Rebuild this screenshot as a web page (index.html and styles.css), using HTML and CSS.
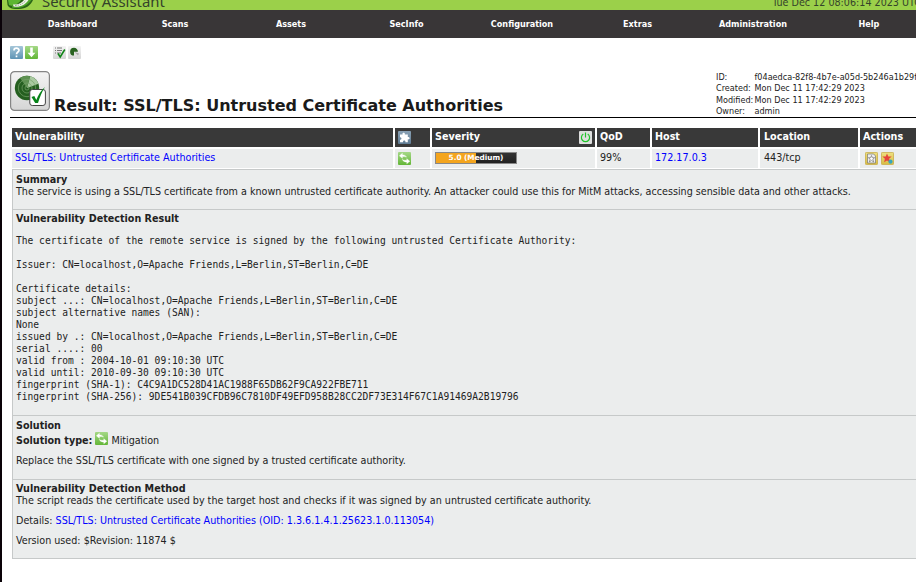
FILE: index.html
```html
<!DOCTYPE html>
<html lang="en">
<head>
<meta charset="utf-8">
<title>Result: SSL/TLS: Untrusted Certificate Authorities</title>
<link rel="stylesheet" href="styles.css">
</head>
<body>
<svg class="defs" width="0" height="0">
  <defs>
    <linearGradient id="blue" x2="0" y2="1"><stop stop-color="#a5c6d8"/><stop offset="1" stop-color="#5e94b5"/></linearGradient>
    <linearGradient id="green" x2="0" y2="1"><stop stop-color="#a5d887"/><stop offset="1" stop-color="#63b637"/></linearGradient>
    <linearGradient id="grey" x2="0" y2="1"><stop stop-color="#f4f4f4"/><stop offset="1" stop-color="#d5d5d5"/></linearGradient>
    <linearGradient id="steel" x2="0" y2="1"><stop stop-color="#8ba2b6"/><stop offset="1" stop-color="#5e7b93"/></linearGradient>
    <linearGradient id="gold" x2="0" y2="1"><stop stop-color="#eee080"/><stop offset="1" stop-color="#d8bc42"/></linearGradient>
    <symbol id="mitigate" viewBox="0 0 13 13">
      <rect width="13" height="13" rx="1" fill="url(#green)"/>
      <path d="M1.4 3.8 4.4 1.3v1.6c2 0 3.4.6 4.1 2.2-1.3-.6-2.6-.6-4.1-.5v1.7zM11.8 9.2 8.8 6.7v1.6c-1.7.1-3 0-4.5-.9.7 1.8 2.4 2.5 4.5 2.6v1.7z" fill="#fff" stroke="#fff" stroke-width=".4"/>
    </symbol>
  </defs>
</svg>
<header class="banner">
  <svg class="logo" width="32" height="10" viewBox="0 0 32 10">
    <path d="M4 0h26c-2 5-7 9-14 9C9 9.300 6 8 4.500 5z" fill="#2a6416"/>
    <path d="M5 0h13c-3 4-8 7-12 5z" fill="#5cb531"/>
    <path d="M9 6c5 2 12 0 16-6h3.500c-4 6-12 9.500-19.500 7.500z" fill="#4da52a"/>
    <path d="M10 4.500c5 .5 9-1.500 11-4.500h4.500c-3 5-9 7.700-15 6.500z" fill="#eef5e5"/>
    <path d="M12 5.500c5 0 8-2 11-5" stroke="#888" stroke-width=".8" stroke-dasharray="1.500 1" fill="none"/>
  </svg>
  <span class="brand">Security Assistant</span>
  <span class="clock">Tue Dec 12 08:06:14 2023 UTC</span>
</header>
<nav class="nav">
  <a>Dashboard</a><a>Scans</a><a>Assets</a><a>SecInfo</a><a>Configuration</a><a>Extras</a><a>Administration</a><a>Help</a>
</nav>
<main class="page">
  <div class="tools">
    <svg viewBox="0 0 13 13"><rect width="13" height="13" rx="1" fill="url(#blue)"/><path d="M4 4.500C4 1.400 9 1.500 9 4.300 9 6 6.500 6.100 6.500 8.300M6.500 9.500v1.700" fill="none" stroke="#fff" stroke-width="1.700"/></svg>
    <svg viewBox="0 0 13 13"><rect width="13" height="13" rx="1" fill="url(#green)"/><path d="M5.200 1.500h2.600v5.200h2.600L6.500 11.300 2.600 6.700h2.600z" fill="#fff"/></svg>
    <svg class="gap" viewBox="0 0 13 13"><rect width="13" height="13" rx="1" fill="url(#grey)"/><path d="M2 2h1M2 4.500h1M2 7h1M4 2h5M4 4.500h5M4 7h4" stroke="#777" stroke-width="1.100"/><path d="m5 7.500 2.200 3.500L11.800 3.500" fill="none" stroke="#118518" stroke-width="1.600"/></svg>
    <svg viewBox="0 0 13 13"><rect width="13" height="13" rx="1" fill="url(#grey)"/><path d="M6 1.800a3.900 3.900 0 1 0 0 7.800V5.800h3.900A3.900 3.900 0 0 0 6 1.800z" fill="#286220"/><path d="m6.500 6 4.500 1.500-1 2z" fill="#aaa"/></svg>
  </div>
  <div class="heading">
    <svg class="result-icon" width="40" height="40" viewBox="0 0 40 40">
      <rect x=".6" y=".6" width="38.800" height="38.800" rx="4" fill="url(#grey)" stroke="#858585" stroke-width="1.200"/>
      <circle cx="17" cy="17" r="12.200" fill="#255f20"/>
      <path d="M17 17 20 5.200a12.200 12.200 0 0 1 8.500 7.500z" fill="#a9c9a0"/>
      <path d="M17 17 10 7a12.200 12.200 0 0 1 10-1.800z" fill="#5e9152"/>
      <g fill="none" stroke="#75a068" stroke-width=".7"><circle cx="17" cy="17" r="8.700"/><circle cx="17" cy="17" r="5"/><circle cx="17" cy="17" r="2"/></g>
      <rect x="19.800" y="18.500" width="15.600" height="16" rx="2.500" fill="#fff" stroke="#444"/>
      <path d="m21.500 26 2.800-1.100 2 4.200C28 24 31 19.500 35 16c-3.200 5-5.200 10-7 16h-2.800z" fill="#078319"/>
    </svg>
    <h1>Result: SSL/TLS: Untrusted Certificate Authorities</h1>
    <dl class="meta">
      <dt>ID:</dt><dd>f04aedca-82f8-4b7e-a05d-5b246a1b29f</dd>
      <dt>Created:</dt><dd>Mon Dec 11 17:42:29 2023</dd>
      <dt>Modified:</dt><dd>Mon Dec 11 17:42:29 2023</dd>
      <dt>Owner:</dt><dd>admin</dd>
    </dl>
  </div>
  <section class="result">
    <div class="row head">
      <div>Vulnerability</div>
      <div><svg class="ico" viewBox="0 0 13 13"><rect width="13" height="13" rx="1" fill="url(#steel)"/><path d="M2 3.500h2.600C3.600 1 7.600 1 6.800 3.500h3v2.600c2.500-1 2.500 3 0 2.200v3H7.400c.6-2.300-2.900-2.300-2.300 0H2V8.700c2 .6 2-2.900 0-2.300z" fill="#fff"/></svg></div>
      <div>Severity<svg class="ico power" viewBox="0 0 13 13"><rect width="13" height="13" rx="1" fill="#dedede"/><path d="M4.300 3.100a4.100 4.100 0 1 0 4.400 0M6.500 1.600v5" fill="none" stroke="#20c52a" stroke-width="1.200"/></svg></div>
      <div>QoD</div><div>Host</div><div>Location</div><div>Actions</div>
    </div>
    <div class="row data">
      <div><a>SSL/TLS: Untrusted Certificate Authorities</a></div>
      <div><svg class="ico"><use href="#mitigate"/></svg></div>
      <div><span class="meter">5.0 (Medium)</span></div>
      <div>99%</div><div><a>172.17.0.3</a></div><div>443/tcp</div>
      <div class="actions">
        <svg class="ico" viewBox="0 0 13 13"><rect x=".4" y=".4" width="12.200" height="12.200" rx="1" fill="url(#gold)" stroke="#c5aa42" stroke-width=".8"/><path d="M2.500 2h6.200L10.500 4v7h-8z" fill="#eee" stroke="#777" stroke-width=".7"/><path d="m6.500 3.500.8 2.200h2.300L7.800 7.200l.9 2.800-2.200-1.600L4.300 10l.9-2.800-1.800-1.500h2.300z" fill="#fff" stroke="#777" stroke-width=".7"/></svg>
        <svg class="ico" viewBox="0 0 13 13"><rect x=".4" y=".4" width="12.200" height="12.200" rx="1" fill="url(#gold)" stroke="#c5aa42" stroke-width=".8"/><path d="m6 1.400 1.300 3 3.400.2-2.600 2.200.8 3.500L6 8.400l-2.900 1.900.8-3.500-2.600-2.200 3.400-.2z" fill="#e5443b"/><circle cx="9.500" cy="9.700" r="2.100" fill="#36a7bd"/></svg>
      </div>
    </div>
    <article class="details">
      <section class="summary"><h2>Summary</h2><p>The service is using a SSL/TLS certificate from a known untrusted certificate authority. An attacker could use this for MitM attacks, accessing sensible data and other attacks.</p></section>
      <section class="detection"><h2>Vulnerability Detection Result</h2>
<pre>The certificate of the remote service is signed by the following untrusted Certificate Authority:

Issuer: CN=localhost,O=Apache Friends,L=Berlin,ST=Berlin,C=DE

Certificate details:
subject ...: CN=localhost,O=Apache Friends,L=Berlin,ST=Berlin,C=DE
subject alternative names (SAN):
None
issued by .: CN=localhost,O=Apache Friends,L=Berlin,ST=Berlin,C=DE
serial ....: 00
valid from : 2004-10-01 09:10:30 UTC
valid until: 2010-09-30 09:10:30 UTC
fingerprint (SHA-1): C4C9A1DC528D41AC1988F65DB62F9CA922FBE711
fingerprint (SHA-256): 9DE541B039CFDB96C7810DF49EFD958B28CC2DF73E314F67C1A91469A2B19796</pre></section>
      <section class="solution"><h2>Solution</h2><p class="type"><b>Solution type:</b><svg class="ico"><use href="#mitigate"/></svg>Mitigation</p><p>Replace the SSL/TLS certificate with one signed by a trusted certificate authority.</p></section>
      <section class="method"><h2>Vulnerability Detection Method</h2><p>The script reads the certificate used by the target host and checks if it was signed by an untrusted certificate authority.</p><p>Details: <a>SSL/TLS: Untrusted Certificate Authorities (OID: 1.3.6.1.4.1.25623.1.0.113054)</a></p><p>Version used: $Revision: 11874 $</p></section>
    </article>
  </section>
</main>
</body>
</html>
```
FILE: styles.css
```css
* { box-sizing: border-box; }
html { background: #fff; }
body { margin: 0; width: 916px; height: 582px; overflow: hidden; border-left: 2px solid #0a0208; color: #222; font: 10.68px/12px "DejaVu Sans Condensed", "DejaVu Sans", sans-serif; font-stretch: condensed; }
.defs { position: absolute; }
h1, h2, p, dl, dd, pre { margin: 0; }
a { color: #00f; }
.banner { height: 10px; display: flex; background: #9bd04a; overflow: hidden; color: #34432a; }
.logo { flex: none; margin-left: 1px; }
.brand { margin-left: 7px; font: 14.9px/20px "Noto Sans", sans-serif; height: 20px; margin-top: -9px; white-space: nowrap; }
.clock { margin: -7px -5px 0 auto; line-height: 20px; white-space: nowrap; }
.nav { height: 28px; width: 926px; display: grid; grid-template-columns: 87px 118px 114px 117px 114px 117px 114px 118px; padding-left: 27px; background: #393637; }
.nav a { color: #fff; font: bold 9px/28px "DejaVu Sans Condensed", sans-serif; text-align: center; }
.page { padding: 8px 0 0 8px; }
.tools { display: flex; gap: 2px; height: 25px; }
.tools svg { width: 13px; height: 13px; }
.tools .gap { margin-left: 13px; }
.heading { height: 47px; width: 906px; border-bottom: 1px solid #000; display: flex; }
.result-icon { flex: none; }
h1 { width: 666px; flex: none; padding: 25px 0 0 4px; font: bold 16px/20px "DejaVu Sans", sans-serif; white-space: nowrap; color: #1a1a1a; }
.meta { display: grid; grid-template-columns: 38.5px 170px; grid-auto-rows: 11.4px; font-size: 9px; line-height: 12px; white-space: nowrap; }
.result { padding: 10px 0 0 2px; width: 950px; }
.row { display: grid; grid-template-columns: 381px 35px 163px 53px 106px 98px 90px; gap: 2px; height: 19px; margin-bottom: 2px; }
.row > div { padding-left: 3px; line-height: 17px; display: flex; white-space: nowrap; }
.row > div:nth-child(6) { padding-left: 4px; }
.head > div { background: #393939; color: #fff; font-weight: bold; }
.data > div { background: #ebeded; }
.data { margin-bottom: 1px; }
.ico { width: 13px; height: 13px; flex: none; margin-top: 3px; }
.power { margin-left: auto; margin-right: 3px; }
.meter { margin-top: 3px; width: 82px; height: 12px; border: 1px solid #888; background: linear-gradient(90deg, #f4a51e 50%, transparent 50%), linear-gradient(#333, #222); color: #fff; font: bold 7.3px/10px "DejaVu Sans", sans-serif; text-align: center; }
.actions { gap: 3px; }
.row .actions { padding-left: 5px; }
.details { border: 1px solid #c6c9c9; background: #ebeded; }
.details section { padding: 4px 3px 0; border-bottom: 1px solid #c6c9c9; }
.details section:last-child { border-bottom: 0; }
.details p { white-space: nowrap; }
h2 { font-size: 10.68px; line-height: 12px; }
.summary { height: 40px; }
.details .detection { height: 206px; padding-top: 3px; }
.solution { height: 64px; }
.details .method { height: 78px; padding-top: 3px; }
pre { margin-top: 10px; font: 9.6px/12px "DejaVu Sans Mono", monospace; }
.type { height: 18px; display: flex; line-height: 17px; }
.type .ico { margin: 0 3px; }
.type + p { margin-top: 5px; }
.method p + p { margin-top: 8px; }
```
